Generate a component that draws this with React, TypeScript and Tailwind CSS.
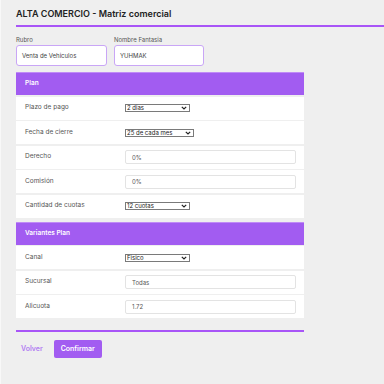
import React from 'react';

const font = { fontFamily: 'Inter, "Liberation Sans", sans-serif' };

function Chevron() {
  return (
    <svg width="6" height="4" viewBox="0 0 6 4" className="shrink-0">
      <path d="M0.8 0.8 L3 3 L5.2 0.8" fill="none" stroke="#222" strokeWidth="1.2" />
    </svg>
  );
}

function FakeSelect({ value, width }: { value: string; width: string }) {
  return (
    <div
      className={`flex h-[8px] items-center justify-between border border-[#7a7a7a] bg-white pl-[1px] pr-[2px] text-[6px] leading-none text-[#222] ${width}`}
    >
      <span>{value}</span>
      <Chevron />
    </div>
  );
}

function TextBox({ value }: { value: string }) {
  return (
    <div className="flex h-[14px] w-[171px] items-center rounded-[2px] border border-[#e3e3e3] bg-white pl-[6px] text-[6px] text-[#555]">
      {value}
    </div>
  );
}

function Row({ label, children }: { label: string; children: React.ReactNode }) {
  return (
    <div className="mt-[1.5px] flex h-[23px] items-center bg-white pl-[9px]">
      <span className="w-[100px] text-[6.5px] text-[#555]">{label}</span>
      {children}
    </div>
  );
}

function Header({ title }: { title: string }) {
  return (
    <div className="flex h-[23px] items-center border-t border-[#c08bf7] bg-[#a25cf1] pl-[9px] text-[6.5px] font-semibold text-white">
      {title}
    </div>
  );
}

export default function App() {
  return (
    <div className="h-[384px] w-[384px] overflow-hidden border-l border-[#f8f8f8] bg-[#efefef] pl-[15px]" style={font}>
      {/* Title */}
      <div className="border-b-2 border-[#a855f7] pt-[7px] pb-[4px]">
        <h1 className="text-[9px] font-semibold leading-[14px] text-[#222]">ALTA COMERCIO - Matriz comercial</h1>
      </div>

      {/* Rubro / Nombre */}
      <div className="mt-[9px] flex gap-[7px]">
        <div className="flex flex-col">
          <span className="text-[6px] leading-[8px] text-[#555]">Rubro</span>
          <div className="mt-[1px] flex h-[21px] w-[91px] items-center rounded-[3px] border border-[#c9a6f6] bg-white pl-[5px] text-[6px] text-[#444]">
            Venta de Vehiculos
          </div>
        </div>
        <div className="flex flex-col">
          <span className="text-[6px] leading-[8px] text-[#555]">Nombre Fantasia</span>
          <div className="mt-[1px] flex h-[21px] w-[90px] items-center rounded-[3px] border border-[#c9a6f6] bg-white pl-[5px] text-[6px] text-[#444]">
            YUHMAK
          </div>
        </div>
      </div>

      {/* Plan */}
      <div className="mt-[6px] w-[288px]">
        <Header title="Plan" />
        <Row label="Plazo de pago">
          <FakeSelect value="2 dias" width="w-[65px]" />
        </Row>
        <Row label="Fecha de cierre">
          <FakeSelect value="25 de cada mes" width="w-[69px]" />
        </Row>
        <Row label="Derecho">
          <TextBox value="0%" />
        </Row>
        <Row label="Comisión">
          <TextBox value="0%" />
        </Row>
        <Row label="Cantidad de cuotas">
          <FakeSelect value="12 cuotas" width="w-[65px]" />
        </Row>
      </div>

      {/* Variantes */}
      <div className="mt-[4px] w-[288px]">
        <Header title="Variantes Plan" />
        <Row label="Canal">
          <FakeSelect value="Fisico" width="w-[65px]" />
        </Row>
        <Row label="Sucursal">
          <TextBox value="Todas" />
        </Row>
        <Row label="Alicuota">
          <TextBox value="1.72" />
        </Row>
      </div>

      <div className="mt-[12px] h-[2px] w-[288px] bg-[#a855f7]" />

      {/* Actions */}
      <div className="mt-[8px] flex items-center">
        <button className="ml-[5px] text-[7px] font-semibold text-[#b27ef2]">Volver</button>
        <button className="ml-[11px] h-[18px] w-[48px] rounded-[2px] bg-[#a25cf1] text-[7px] font-semibold text-white">
          Confirmar
        </button>
      </div>
    </div>
  );
}
